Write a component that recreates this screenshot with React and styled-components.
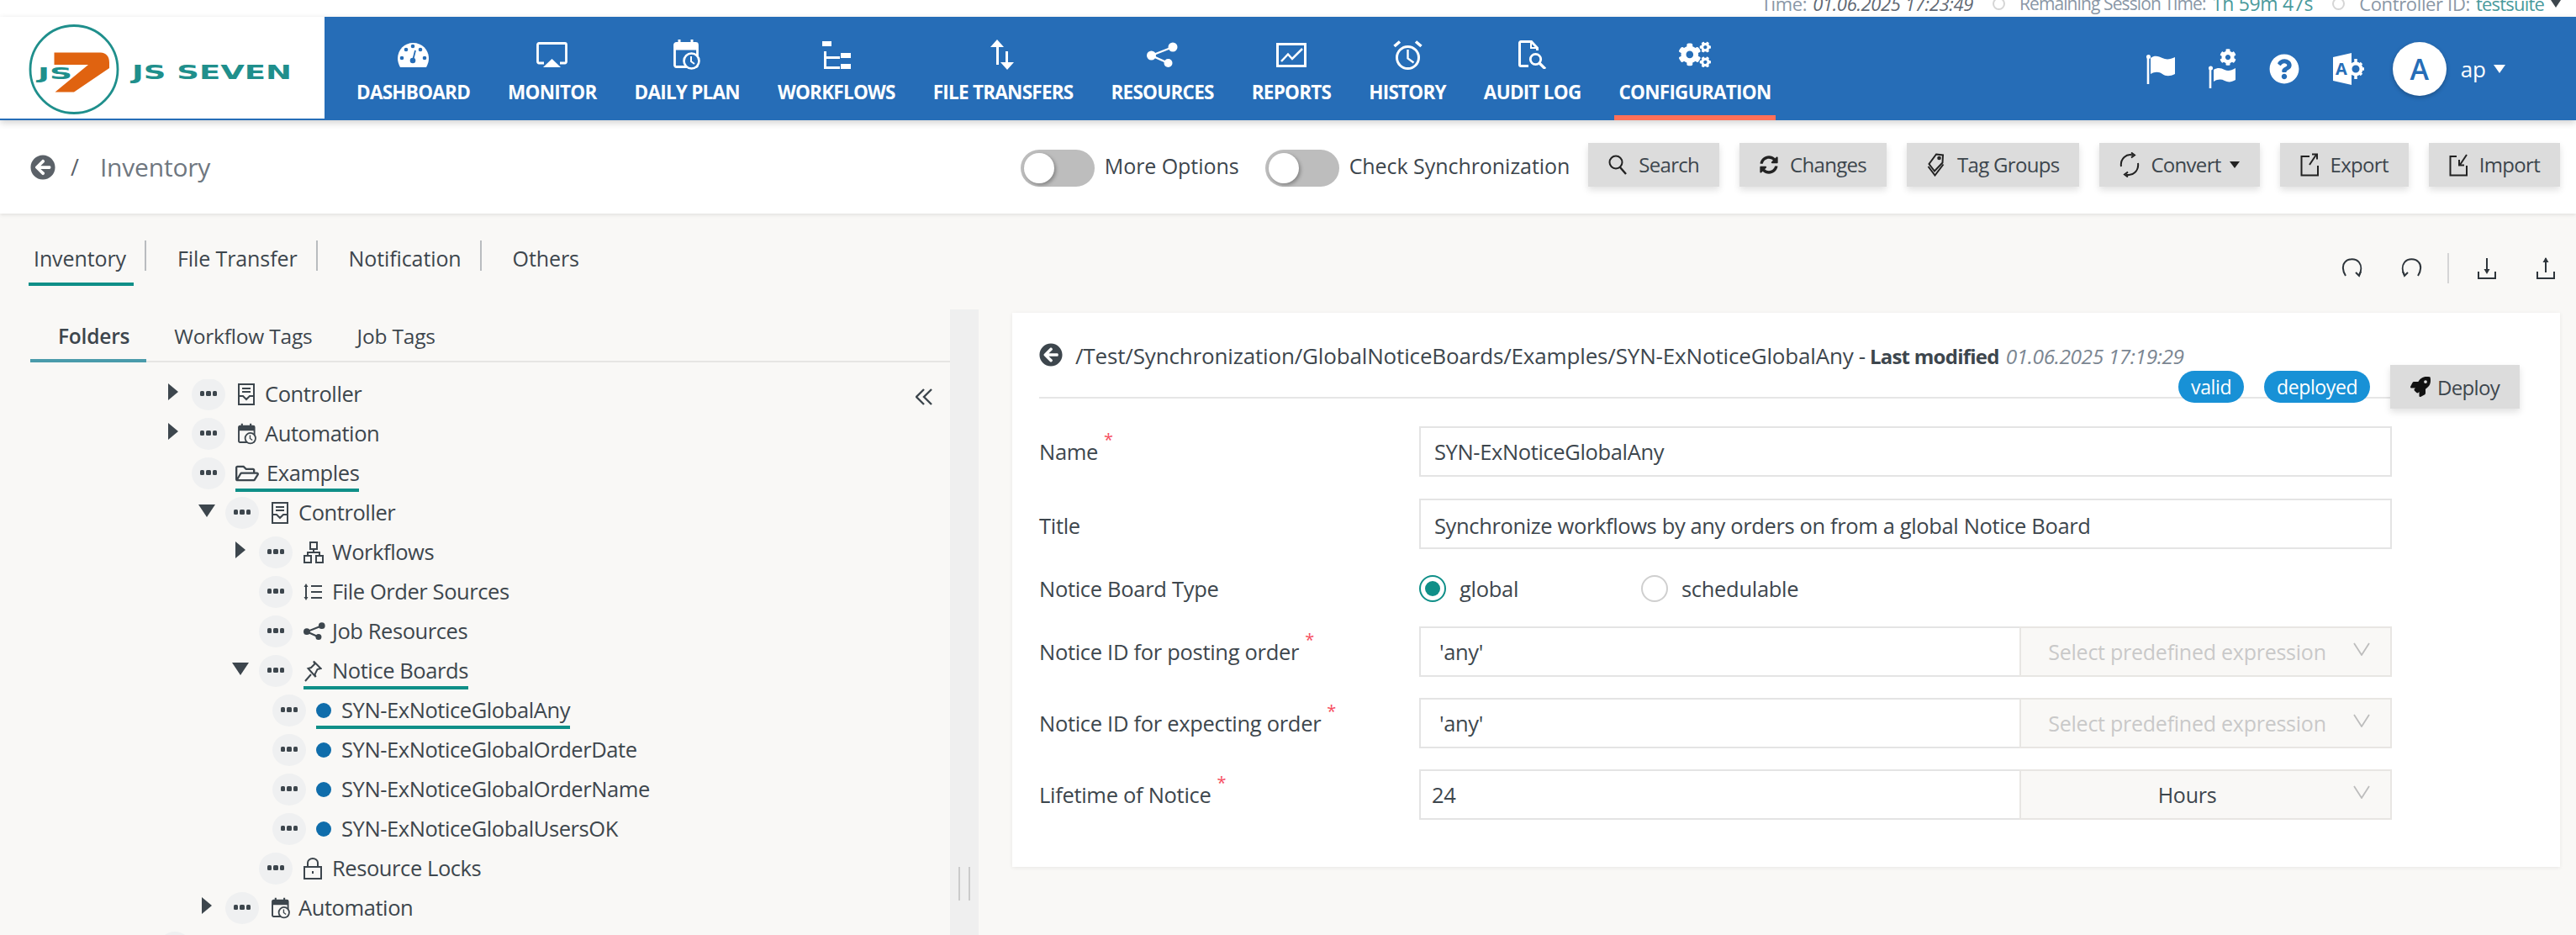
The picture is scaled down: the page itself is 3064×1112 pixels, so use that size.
import React from 'react';
import styled, { createGlobalStyle } from 'styled-components';
import { FaCogs, FaQuestionCircle, FaRegFolderOpen, FaRocket, FaSyncAlt, FaArrowCircleLeft, FaCog } from 'react-icons/fa';

const BLUE = '#266db7';
const INK = '#3d464d';
const PAGE = '#f9f8f6';
const TEAL = '#0f8f88';

const Global = createGlobalStyle`
  html, body { margin: 0; padding: 0; height: 100%; overflow: hidden; background: ${PAGE}; }
  #root { width: 3064px; height: 1112px; overflow: hidden; }
  * { box-sizing: border-box; }
  body { font-family: "Open Sans", "Noto Sans", sans-serif; font-size: 24px; color: ${INK}; }
`;

const Page = styled.div`display: flex; flex-direction: column; height: 1112px; background: ${PAGE};`;

/* status strip */
const Strip = styled.div`
  height: 20px; background: #fff; overflow: hidden; display: flex; justify-content: flex-end;
  padding-right: 18px;
`;
const StripRow = styled.div`
  display: flex; align-items: center; height: 30px; margin-top: -11px; color: #8a97a6; white-space: nowrap;
`;
const StripLabel = styled.span`font-size: ${p => p.$fs}px; letter-spacing: ${p => p.$ls}px;`;
const StripTime = styled.em`color: #5f6873; margin-left: 7px; font-size: 22px; letter-spacing: -0.35px;`;
const StripValue = styled.span`color: #4a9a9c; margin-left: 7px; font-size: ${p => p.$fs}px; letter-spacing: ${p => p.$ls}px;`;
const StripRing = styled.span`width: 15px; height: 15px; border: 2.5px solid #d5d5d5; border-radius: 50%; margin: 0 17px 0 23px;`;
const StripCaret = styled.span`width: 0; height: 0; border: 6px solid transparent; border-top: 9px solid #3d464d; border-bottom: 0; margin-left: 8px;`;

/* main header */
const Header = styled.header`
  height: 123px; display: flex; position: relative; z-index: 3; box-shadow: 0 3px 8px rgba(0,0,0,.18);
`;
const LogoBox = styled.div`
  width: 386px; background: #fff; border-bottom: 2px solid ${BLUE}; padding: 0 0 0 20px; flex: none;
`;
const Nav = styled.nav`flex: 1; background: ${BLUE}; display: flex; padding-left: 15.5px; color: #fff;`;
const NavItem = styled.div`
  margin: 0 16.5px; padding: 27px 6px 0; display: flex; flex-direction: column; align-items: center;
  border-bottom: 6px solid ${p => (p.$active ? '#ff7058' : 'transparent')};
`;
const NavIcon = styled.div`height: 36px; display: flex; align-items: center; justify-content: center;`;
const NavLabel = styled.div`font-weight: 700; font-size: 22.5px; letter-spacing: -0.75px; line-height: 28px; margin-top: 13px; white-space: nowrap;`;
const HeadTools = styled.div`
  margin-left: auto; display: flex; align-items: center; gap: 40px; padding-right: 84px;
`;
const Avatar = styled.div`
  width: 64px; height: 64px; border-radius: 50%; background: #fff; color: ${BLUE}; font-size: 34px; font-weight: 600;
  display: flex; align-items: center; justify-content: center; margin-left: -8px; box-shadow: 0 2px 5px rgba(0,0,0,.25);
`;
const UserName = styled.div`display: flex; align-items: center; font-size: 26px; margin-left: -23px; gap: 9px;`;
const UserCaret = styled.span`width: 0; height: 0; border: 7.5px solid transparent; border-top: 10px solid #fff; border-bottom: 0;`;

/* sub header */
const SubBar = styled.div`
  height: 111px; background: #fff; display: flex; align-items: center; padding: 0 19px 0 36px; position: relative; z-index: 2;
  box-shadow: 0 1px 5px rgba(0,0,0,.12);
`;
const Crumb = styled.div`display: flex; align-items: center; color: #5b6168; font-size: 27px;`;
const CrumbSlash = styled.span`margin: 0 25px 0 18px;`;
const CrumbText = styled.span`color: #6f7780; font-size: 30px; letter-spacing: -0.2px;`;
const ToolBar = styled.div`margin-left: auto; display: flex; align-items: flex-start; height: 52px; margin-top: -6px;`;
const Toggle = styled.div`display: flex; align-items: center; gap: 12px; margin-right: ${p => p.$mr}px; height: 44px; margin-top: 8px; font-size: 25px; letter-spacing: -0.05px;
  white-space: nowrap; & > span:last-child { position: relative; top: -3px; }`;
const Track = styled.span`
  width: 88px; height: 44px; background: #bdbdbd; border-radius: 22px; padding: 4px; display: block; flex: none;
`;
const Knob = styled.span`
  width: 36px; height: 36px; background: #fff; border-radius: 50%; display: block; box-shadow: 2px 2px 4px rgba(0,0,0,.3);
`;
const Btn = styled.div`
  height: 52px; padding: 0 24px; background: #dcdcdc; display: flex; align-items: center; gap: ${p => p.$gap || 14}px;
  box-shadow: 0 4px 8px rgba(0,0,0,.12); white-space: nowrap; font-size: 24px; letter-spacing: -0.7px; margin-left: ${p => p.$first ? 0 : 24}px;
  color: ${INK};
`;
const BtnCaret = styled.span`width: 0; height: 0; border: 6px solid transparent; border-top: 8px solid #222; border-bottom: 0; margin-left: -3px;`;

/* tabs row */
const TabsRow = styled.div`height: 114px; display: flex; padding: 32px 24px 0 34px; flex: none;`;
const MainTab = styled.div`
  height: 54px; padding: 4px 22px 0 6px; font-size: 25px; letter-spacing: -.1px; font-weight: 500; position: relative; white-space: nowrap;
  ${p => p.$active ? `&::after{content:"";position:absolute;left:0;right:13px;bottom:0;height:4px;background:${TEAL};}` : ''}
`;
const TabSep = styled.span`width: 2px; height: 36px; background: #b9bcbf; margin: 0 31px 0 0;`;
const EditTools = styled.div`margin-left: auto; display: flex; align-items: center; height: 36px; margin-top: 15px;`;
const ToolIcon = styled.span`display: flex; margin-left: ${p => p.$ml || 0}px; color: #2e353b;`;
const ToolSep = styled.span`width: 2px; height: 36px; background: #d5d5d5; margin: 0 33px 0 30px;`;

/* workspace */
const Workspace = styled.div`flex: 1; display: flex; padding: 0 19px 0 36px; min-height: 0;`;
const LeftPanel = styled.div`width: 1094px; flex: none; display: flex; flex-direction: column; position: relative;`;
const PanelTabs = styled.div`height: 63px; flex: none; display: flex; border-bottom: 2px solid #e6e5e3;`;
const PanelTab = styled.div`
  padding: 15px 20px 0 33px; height: 63px; font-size: 24.5px; letter-spacing: -.2px; white-space: nowrap; font-weight: ${p => p.$active ? 600 : 400};
  ${p => p.$active ? `border-bottom: 4px solid #4a9bab;` : ''}
`;
const Collapse = styled.span`position: absolute; right: 21px; top: 94px; display: flex; color: ${INK};`;
const Tree = styled.div`margin-top: 20px; flex: 1; overflow: hidden; min-height: 0;`;
const TreeInner = styled.div`margin-top: -6px;`;
const Row = styled.div`height: 47px; display: flex; align-items: center; padding-left: ${p => p.$btn - 68}px; white-space: nowrap;`;
const CaretSlot = styled.span`width: 20px; margin-right: 12px; flex: none; display: flex; justify-content: center;`;
const Caret = styled.span`
  width: 0; height: 0; border-style: solid; border-color: transparent;
  ${p => p.$open
    ? `border-width: 15px 10px 0; border-top-color: ${INK}; margin-top: -4px;`
    : `border-width: 10px 0 10px 12px; border-left-color: ${INK}; margin-top: -6px;`}
`;
const Dots = styled.span`
  width: 40px; height: 38px; border-radius: 50%; background: #eff0f1; flex: none; display: flex; align-items: center; justify-content: center; gap: 2px;
  & > i { width: 5.5px; height: 6px; border-radius: 1.5px; background: ${INK}; display: block; margin-top: -2px; }
`;
const Entry = styled.div`
  margin-left: ${p => p.$ml}px; display: flex; align-items: center; height: 38px; position: relative;
  ${p => p.$mark ? `&::after{content:"";position:absolute;left:0;right:0;bottom:-3px;height:4px;background:${TEAL};}` : ''}
`;
const EntryIcon = styled.span`width: ${p => p.$w}px; flex: none; display: flex; align-items: center; color: ${INK};`;
const EntryText = styled.span`font-size: 25.5px; letter-spacing: -0.42px; margin-top: -1px;`;
const Bullet = styled.span`width: 18px; height: 18px; background: #0f6dab; border-radius: 50%; display: block;`;

const Splitter = styled.div`
  width: 34px; flex: none; background: #efefef; display: flex; align-items: flex-end; justify-content: center; gap: 10px; padding-bottom: 41px;
  & > i { display: block; width: 2px; height: 40px; background: #cbcbcb; }
`;

/* editor card */
const Card = styled.section`
  flex: 1; margin: 4px 0 81px 40px; background: #fff; box-shadow: 0 1px 5px rgba(0,0,0,.07); padding: 36px 48px 0 32px; position: relative; min-width: 0;
`;
const CardHead = styled.div`
  height: 66px; border-bottom: 2px solid #e6e6e6; display: flex; align-items: flex-start; gap: 15px; white-space: nowrap;
`;
const CardPath = styled.div`font-size: 26px; letter-spacing: -.16px; font-weight: 500; color: ${INK}; margin-top: -3px;`;
const Dash = styled.span`font-weight: 400; margin: 0 5px 0 6px;`;
const Modified = styled.b`font-weight: 700; font-size: 24px; letter-spacing: -.75px;`;
const Stamp = styled.em`font-weight: 400; color: #7b8692; margin-left: 8px; font-size: 24.5px; letter-spacing: -.42px;`;
const CardActions = styled.div`
  position: absolute; right: 48px; top: 62px; display: flex; align-items: center; gap: 24px;
`;
const Badge = styled.span`
  height: 38px; padding: 0 15px; border-radius: 19px; background: #1891d6; color: #fff; font-size: 23px; letter-spacing: -.4px; display: flex; align-items: center; white-space: nowrap;
`;
const Form = styled.div`padding: 33px 152px 0 0; display: flex; flex-direction: column;`;
const FormRow = styled.div`display: grid; grid-template-columns: 452px 1fr; align-items: center; margin-top: ${p => p.$mt || 0}px; min-height: 32px;`;
const Label = styled.div`font-size: 25.5px; letter-spacing: -.3px; color: ${INK}; white-space: nowrap; display: flex; padding-top: ${p => p.$pt || 0}px;`;
const Req = styled.sup`color: #f64e60; font-size: 20px; line-height: 1; margin-left: 7px; margin-top: -7px;`;
const Field = styled.div`
  height: 60px; border: 2px solid #e4e4e4; background: #fff; display: flex; align-items: center; padding-left: ${p => p.$pad || 16}px; padding-top: ${p => p.$pt || 0}px; font-size: 25.5px; letter-spacing: -.37px; color: ${INK}; white-space: nowrap;
`;
const Group = styled.div`display: grid; grid-template-columns: 1fr 443px;`;
const GroupField = styled(Field)`border-right: 0;`;
const Select = styled.div`
  height: 60px; border: 2px solid #e8e6e3; background: ${PAGE}; display: flex; align-items: center; justify-content: center; position: relative; padding-right: 44px; padding-left: 0;
  color: ${p => p.$muted ? '#c9c9c9' : INK}; font-size: 25px; letter-spacing: -.25px; white-space: nowrap;
`;
const Chevron = styled.span`position: absolute; right: 24px; top: 17px; display: flex; color: #bdbdbd;`;
const Radios = styled.div`display: flex; align-items: center;`;
const Radio = styled.span`
  width: 32px; height: 32px; border-radius: 50%; border: 2.5px solid ${p => p.$on ? TEAL : '#cfcfcf'}; display: flex; align-items: center; justify-content: center; flex: none;
  &::after { content: ""; width: 18px; height: 18px; border-radius: 50%; background: ${p => p.$on ? TEAL : 'transparent'}; }
`;
const RadioText = styled.span`font-size: 25.5px; letter-spacing: -.3px; margin-left: 16px; width: ${p => p.$w}px;`;

/* ---------- drawn icons ---------- */
const Gauge = () => (
  <svg width="37" height="29" viewBox="0 0 37 29">
    <path fill="#fff" d="M3 29C1 25 0 22 0 18.5 0 8 8.300 0 18.500 0S37 8 37 18.500c0 3.500-1 6.500-3 10.500z" />
    <g fill={BLUE}>
      <circle cx="5" cy="18" r="2.300" /><circle cx="10" cy="8" r="2.300" /><circle cx="18" cy="4" r="2.300" /><circle cx="27" cy="8" r="2.300" /><circle cx="32" cy="18" r="2.300" />
      <circle cx="18" cy="21" r="3.300" />
    </g>
    <path d="M18 21l3-12" stroke={BLUE} strokeWidth="1.800" />
  </svg>
);
const Air = () => (
  <svg width="37" height="30" viewBox="0 0 37 30">
    <path d="M9 25H3A1.500 1.500 0 0 1 1.500 23.500V3A1.500 1.500 0 0 1 3 1.500h31A1.500 1.500 0 0 1 35.500 3v20.500A1.500 1.500 0 0 1 34 25h-6" fill="none" stroke="#fff" strokeWidth="2.800" />
    <path d="M8 30l10.500-10L29 30z" fill="#fff" />
  </svg>
);
const CalClock = ({ w = 32, h = 36, bg = BLUE }) => (
  <svg width={w} height={h} viewBox="0 0 32 36" style={{ color: 'inherit' }}>
    <rect x="1.500" y="4.500" width="27" height="28" rx="2" fill="none" stroke="currentColor" strokeWidth="2.800" />
    <rect x="1.500" y="4.500" width="27" height="8" fill="currentColor" />
    <path d="M7 0v6M22 0v6" stroke="currentColor" strokeWidth="3" />
    <circle cx="21.500" cy="25.500" r="9" fill={bg} stroke="currentColor" strokeWidth="2.600" />
    <path d="M21 20v6l4 3" fill="none" stroke="currentColor" strokeWidth="2" />
  </svg>
);
const Flow = () => (
  <svg width="34" height="33" viewBox="0 0 34 33">
    <g fill="#fff">
      <rect x="0" y="0" width="11" height="6" /><rect x="2" y="12" width="3" height="21" /><rect x="2" y="18" width="19" height="3" /><rect x="2" y="30" width="19" height="3" />
      <rect x="22" y="14" width="12" height="6" /><rect x="22" y="27" width="12" height="6" />
    </g>
  </svg>
);
const Transfer = () => (
  <svg width="30" height="36" viewBox="0 0 30 36">
    <path fill="#fff" d="M0 9l8-9 8 9h-6v21H7V9zM18 14h3v13h7l-8 9-8-9h6z" />
  </svg>
);
const Share = ({ w = 37, h = 30, stroke = 2.400 }) => (
  <svg width={w} height={h} viewBox="0 0 37 30">
    <path d="M31 6L5.500 16 25.500 25" fill="none" stroke="currentColor" strokeWidth={stroke} />
    <circle cx="31" cy="6" r="5.500" fill="currentColor" /><circle cx="5.500" cy="16" r="5.500" fill="currentColor" /><circle cx="25.500" cy="25" r="5" fill="currentColor" />
  </svg>
);
const Chart = () => (
  <svg width="36" height="29" viewBox="0 0 36 29">
    <rect x="1.500" y="1.500" width="33" height="26" fill="none" stroke="#fff" strokeWidth="3" />
    <path d="M6 22l8-8.500 5 5.500L31 7" fill="none" stroke="#fff" strokeWidth="2.500" />
  </svg>
);
const Alarm = () => (
  <svg width="35" height="36" viewBox="0 0 35 36">
    <circle cx="17.500" cy="21.500" r="13" fill="none" stroke="#fff" strokeWidth="3" />
    <path d="M17.500 12v10.500l7 5" fill="none" stroke="#fff" strokeWidth="2.400" />
    <path d="M1.500 8L8 2.500M27 2.500L33.500 8" stroke="#fff" strokeWidth="3.600" />
  </svg>
);
const AuditDoc = () => (
  <svg width="34" height="34" viewBox="0 0 34 34">
    <path d="M12 30.500H3A1.500 1.500 0 0 1 1.500 29V3A1.500 1.500 0 0 1 3 1.500h12.500l7 7.500v3" fill="none" stroke="#fff" strokeWidth="3" />
    <path d="M15 1.500V9h7" fill="none" stroke="#fff" strokeWidth="2" />
    <circle cx="20.500" cy="22.500" r="6.200" fill="none" stroke="#fff" strokeWidth="2.800" />
    <path d="M25 27l7 7" stroke="#fff" strokeWidth="3.200" />
  </svg>
);
const Flag = () => (
  <svg width="34" height="36" viewBox="0 0 34 36">
    <path d="M2 2v34" stroke="#fff" strokeWidth="2.600" /><circle cx="2.500" cy="3.500" r="2.500" fill="#fff" />
    <path fill="#fff" d="M5 5c5-4 10-2 14 0s9 2 15-1v20c-6 3-11 3-15 0s-9-3-14 0z" />
  </svg>
);
const FlagCogBox = styled.div`display: flex; flex-direction: column; align-items: flex-end; width: 32px;`;
const FlagCog = () => (
  <FlagCogBox>
    <FaCog size={20} color="#fff" style={{ marginRight: -1, marginBottom: 1 }} />
    <svg width="32" height="27" viewBox="0 0 32 27" style={{ marginTop: -1 }}>
      <path d="M2 2v25" stroke="#fff" strokeWidth="2.600" /><circle cx="2.500" cy="3" r="2.500" fill="#fff" />
      <path fill="#fff" d="M6 5c5-3 9-2 13 0s8 1 13-2v14c-5 3-9 3-13 1s-8-2-13 1z" />
    </svg>
  </FlagCogBox>
);
const Translate = () => (
  <svg width="39" height="38" viewBox="0 0 39 38">
    <path fill="#fff" d="M0 5L22 0v38L0 33z" />
    <text x="3" y="26" fontFamily="Open Sans" fontWeight="700" fontSize="20" fill={BLUE}>A</text>
    <g fill="none" stroke="#fff">
      <circle cx="27" cy="19" r="6.500" strokeWidth="4" />
      <path d="M27 7v4M27 27v4M37 19h-4M21 19h-4M34 12l-3 3M23 23l-3 3M34 26l-3-3" strokeWidth="3.500" />
    </g>
  </svg>
);
const Logo = () => (
  <svg width="340" height="121" viewBox="0 0 340 121">
    <circle cx="68" cy="62.500" r="52" fill="none" stroke="#1f8f8c" strokeWidth="2.800" />
    <path fill="#e06310" d="M44.500 42.500h55c7 .5 10.500 4.500 10.500 12v6.500L68 89.500H45.500L85 57H44.500z" />
    <text x="25" y="74" fontFamily="DejaVu Sans" fontWeight="700" fontSize="19" fill="#1f8f8c" textLength="41" lengthAdjust="spacingAndGlyphs">JS</text>
    <text x="137" y="74" fontFamily="DejaVu Sans" fontWeight="700" fontSize="23" fill="#1f8f8c" textLength="190" lengthAdjust="spacingAndGlyphs">JS SEVEN</text>
  </svg>
);
const Glass = () => (
  <svg width="22" height="24" viewBox="0 0 22 24"><circle cx="9" cy="9" r="7.500" fill="none" stroke="#222" strokeWidth="2" /><path d="M14 15l7 8" stroke="#222" strokeWidth="2.400" /></svg>
);
const Tagz = () => (
  <svg width="22" height="28" viewBox="0 0 22 28" fill="none" stroke="#222" strokeWidth="2">
    <path d="M11 1.500l8 1-.5 9L9 21.500 2.500 13z" /><path d="M1.500 16l8 10.500 10-13" /><circle cx="14.500" cy="6" r="1.300" />
  </svg>
);
const Cycle = () => (
  <svg width="24" height="30" viewBox="0 0 24 30" fill="none" stroke="#222" strokeWidth="2">
    <path d="M2 17A11 12 0 0 1 16 3.500" /><path d="M14 .5l4 3-4 3" /><path d="M22 13A11 12 0 0 1 8 26.500" /><path d="M10 29.500l-4-3 4-3" />
  </svg>
);
const Out = () => (
  <svg width="22" height="28" viewBox="0 0 22 28" fill="none" stroke="#222" strokeWidth="2">
    <path d="M11 4H1.500v22.500H21V15" /><path d="M11 14L19 2" /><path d="M14 1.500h6v6" />
  </svg>
);
const In = () => (
  <svg width="22" height="28" viewBox="0 0 22 28" fill="none" stroke="#222" strokeWidth="2">
    <path d="M9 4H1.500v22.500H21V15" /><path d="M21 2L13 14" /><path d="M12 8v6.500h6" />
  </svg>
);
const Loop = ({ flip }) => (
  <svg width="25" height="24" viewBox="0 0 25 24" fill="none" stroke="#2e353b" strokeWidth="2" style={flip ? { transform: 'scaleX(-1)' } : undefined}>
    <path d="M5 21C1 15 1 8 4 5c4-5 13-5 17 0 3 4 3 10 0 15" /><path d="M17 17l4 4 2-5" />
  </svg>
);
const Tray = ({ up }) => (
  <svg width="24" height="26" viewBox="0 0 24 26" fill="none" stroke="#2e353b" strokeWidth="2">
    <path d="M2 17v8h20v-8" />
    <path d="M12 1v17" />
    {up ? <path d="M12 0l-3.500 6h7z" fill="#2e353b" stroke="none" /> : <path d="M12 20l-3.500-6h7z" fill="#2e353b" stroke="none" />}
  </svg>
);
const Rewind = () => (
  <svg width="20" height="20" viewBox="0 0 20 20" fill="none" stroke="currentColor" strokeWidth="2.400"><path d="M10 1L1 10l9 9" /><path d="M19 1l-9 9 9 9" /></svg>
);
const ChevronV = () => (
  <svg width="20" height="16" viewBox="0 0 20 16" fill="none" stroke="currentColor" strokeWidth="1.800"><path d="M1 1l9 14L19 1" /></svg>
);
const CtrlDoc = () => (
  <svg width="20" height="26" viewBox="0 0 20 26" fill="none" stroke="currentColor" strokeWidth="2">
    <rect x="1" y="1" width="18" height="24" /><path d="M5 6h10M5 10h10" /><path d="M1 15h5l4 4 4-4h5" />
  </svg>
);
const Sitemap = () => (
  <svg width="24" height="26" viewBox="0 0 24 26" fill="none" stroke="currentColor" strokeWidth="2">
    <rect x="8" y="1" width="8" height="8" /><rect x="1" y="17" width="8" height="8" /><rect x="15" y="17" width="8" height="8" /><path d="M12 9v4M5 17v-4h14v4" />
  </svg>
);
const OrderList = () => (
  <svg width="22" height="20" viewBox="0 0 22 20" fill="none" stroke="currentColor" strokeWidth="2">
    <path d="M3 2v16" /><path d="M3 0L.500 4h5zM3 20L.500 16h5z" fill="currentColor" stroke="none" /><path d="M9 3h13M9 10h13M9 17h13" />
  </svg>
);
const PinIcon = () => (
  <svg width="22" height="26" viewBox="0 0 22 26" fill="none" stroke="currentColor" strokeWidth="2">
    <path d="M12 1.500l8.500 8.500-4 1-3 6 1 3-9-10 3.500-1 4.500-4.500zM9 17l-7 8" />
  </svg>
);
const LockIcon = () => (
  <svg width="22" height="26" viewBox="0 0 22 26" fill="none" stroke="currentColor" strokeWidth="2">
    <rect x="1" y="11" width="20" height="14" /><path d="M5 11V6a6 5 0 0 1 12 0v5" /><path d="M11 16v3" />
  </svg>
);

const navs = [
  ['DASHBOARD', <Gauge />], ['MONITOR', <Air />], ['DAILY PLAN', <CalClock />], ['WORKFLOWS', <Flow />],
  ['FILE TRANSFERS', <Transfer />], ['RESOURCES', <Share />], ['REPORTS', <Chart />], ['HISTORY', <Alarm />],
  ['AUDIT LOG', <AuditDoc />], ['CONFIGURATION', <FaCogs size={38} />],
];

const treeBg = PAGE;
const rows = [
  { btn: 228, caret: 'r', ml: 15, w: 32, icon: <CtrlDoc />, text: 'Controller' },
  { btn: 228, caret: 'r', ml: 15, w: 32, icon: <CalClock w={22} h={26} bg={treeBg} />, text: 'Automation' },
  { btn: 228, ml: 12, w: 37, icon: <FaRegFolderOpen size={28} />, text: 'Examples', mark: true },
  { btn: 268, caret: 'd', ml: 15, w: 32, icon: <CtrlDoc />, text: 'Controller' },
  { btn: 308, caret: 'r', ml: 13, w: 34, icon: <Sitemap />, text: 'Workflows' },
  { btn: 308, ml: 13, w: 34, icon: <OrderList />, text: 'File Order Sources' },
  { btn: 308, ml: 13, w: 34, icon: <Share w={26} h={21} stroke={3} />, text: 'Job Resources' },
  { btn: 308, caret: 'd', ml: 13, w: 34, icon: <PinIcon />, text: 'Notice Boards', mark: true },
  { btn: 324, ml: 12, w: 30, icon: <Bullet />, text: 'SYN-ExNoticeGlobalAny', mark: true },
  { btn: 324, ml: 12, w: 30, icon: <Bullet />, text: 'SYN-ExNoticeGlobalOrderDate' },
  { btn: 324, ml: 12, w: 30, icon: <Bullet />, text: 'SYN-ExNoticeGlobalOrderName' },
  { btn: 324, ml: 12, w: 30, icon: <Bullet />, text: 'SYN-ExNoticeGlobalUsersOK' },
  { btn: 308, ml: 13, w: 34, icon: <LockIcon />, text: 'Resource Locks' },
  { btn: 268, caret: 'r', ml: 15, w: 32, icon: <CalClock w={22} h={26} bg={treeBg} />, text: 'Automation' },
  { btn: 188 },
];

export default function App() {
  return (
    <Page>
      <Global />
      <Strip>
        <StripRow>
          <StripLabel $fs={22} $ls={-0.35}>Time:</StripLabel><StripTime>01.06.2025 17:23:49</StripTime>
          <StripRing /><StripLabel $fs={21} $ls={-0.9}>Remaining Session Time:</StripLabel><StripValue $fs={23} $ls={-0.35}>1h 59m 47s</StripValue>
          <StripRing /><StripLabel $fs={22} $ls={-0.35}>Controller ID:</StripLabel><StripValue $fs={22} $ls={-0.8}>testsuite</StripValue><StripCaret />
        </StripRow>
      </Strip>

      <Header>
        <LogoBox><Logo /></LogoBox>
        <Nav>
          {navs.map(([label, icon]) => (
            <NavItem key={label} $active={label === 'CONFIGURATION'}>
              <NavIcon>{icon}</NavIcon>
              <NavLabel>{label}</NavLabel>
            </NavItem>
          ))}
          <HeadTools>
            <Flag /><FlagCog /><FaQuestionCircle size={36} /><Translate />
            <Avatar>A</Avatar>
            <UserName>ap<UserCaret /></UserName>
          </HeadTools>
        </Nav>
      </Header>

      <SubBar>
        <Crumb>
          <FaArrowCircleLeft size={30} />
          <CrumbSlash>/</CrumbSlash>
          <CrumbText>Inventory</CrumbText>
        </Crumb>
        <ToolBar>
          <Toggle $mr={31}><Track><Knob /></Track><span>More Options</span></Toggle>
          <Toggle $mr={22}><Track><Knob /></Track><span>Check Synchronization</span></Toggle>
          <Btn $first><Glass />Search</Btn>
          <Btn><FaSyncAlt size={22} color="#222" />Changes</Btn>
          <Btn><Tagz />Tag Groups</Btn>
          <Btn $gap={13}><Cycle />Convert<BtnCaret /></Btn>
          <Btn><Out />Export</Btn>
          <Btn><In />Import</Btn>
        </ToolBar>
      </SubBar>

      <TabsRow>
        <MainTab $active>Inventory</MainTab><TabSep />
        <MainTab>File Transfer</MainTab><TabSep />
        <MainTab>Notification</MainTab><TabSep />
        <MainTab>Others</MainTab>
        <EditTools>
          <ToolIcon><Loop /></ToolIcon>
          <ToolIcon $ml={46}><Loop flip /></ToolIcon>
          <ToolSep />
          <ToolIcon><Tray /></ToolIcon>
          <ToolIcon $ml={46}><Tray up /></ToolIcon>
        </EditTools>
      </TabsRow>

      <Workspace>
        <LeftPanel>
          <PanelTabs>
            <PanelTab $active>Folders</PanelTab>
            <PanelTab>Workflow Tags</PanelTab>
            <PanelTab>Job Tags</PanelTab>
          </PanelTabs>
          <Collapse><Rewind /></Collapse>
          <Tree>
            <TreeInner>
              {rows.map((r, i) => (
                <Row key={i} $btn={r.btn}>
                  <CaretSlot>{r.caret && <Caret $open={r.caret === 'd'} />}</CaretSlot>
                  <Dots><i /><i /><i /></Dots>
                  {r.text && (
                    <Entry $ml={r.ml} $mark={r.mark}>
                      <EntryIcon $w={r.w}>{r.icon}</EntryIcon>
                      <EntryText>{r.text}</EntryText>
                    </Entry>
                  )}
                </Row>
              ))}
            </TreeInner>
          </Tree>
        </LeftPanel>
        <Splitter><i /><i /></Splitter>
        <Card>
          <CardHead>
            <FaArrowCircleLeft size={28} />
            <CardPath>
              /Test/Synchronization/GlobalNoticeBoards/Examples/SYN-ExNoticeGlobalAny<Dash>-</Dash><Modified>Last modified</Modified><Stamp>01.06.2025 17:19:29</Stamp>
            </CardPath>
          </CardHead>
          <CardActions>
            <Badge>valid</Badge>
            <Badge>deployed</Badge>
            <Btn $first $gap={8}><FaRocket size={24} color="#111" />Deploy</Btn>
          </CardActions>
          <Form>
            <FormRow>
              <Label>Name<Req>*</Req></Label>
              <Field>SYN-ExNoticeGlobalAny</Field>
            </FormRow>
            <FormRow $mt={26}>
              <Label $pt={3}>Title</Label>
              <Field $pt={3}>Synchronize workflows by any orders on from a global Notice Board</Field>
            </FormRow>
            <FormRow $mt={30}>
              <Label>Notice Board Type</Label>
              <Radios>
                <Radio $on /><RadioText $w={216}>global</RadioText>
                <Radio /><RadioText>schedulable</RadioText>
              </Radios>
            </FormRow>
            <FormRow $mt={28}>
              <Label>Notice ID for posting order<Req>*</Req></Label>
              <Group>
                <GroupField $pad={22}>'any'</GroupField>
                <Select $muted>Select predefined expression<Chevron><ChevronV /></Chevron></Select>
              </Group>
            </FormRow>
            <FormRow $mt={25}>
              <Label>Notice ID for expecting order<Req>*</Req></Label>
              <Group>
                <GroupField $pad={22}>'any'</GroupField>
                <Select $muted>Select predefined expression<Chevron><ChevronV /></Chevron></Select>
              </Group>
            </FormRow>
            <FormRow $mt={25}>
              <Label>Lifetime of Notice<Req>*</Req></Label>
              <Group>
                <GroupField $pad={13}>24</GroupField>
                <Select>Hours<Chevron><ChevronV /></Chevron></Select>
              </Group>
            </FormRow>
          </Form>
        </Card>
      </Workspace>
    </Page>
  );
}
